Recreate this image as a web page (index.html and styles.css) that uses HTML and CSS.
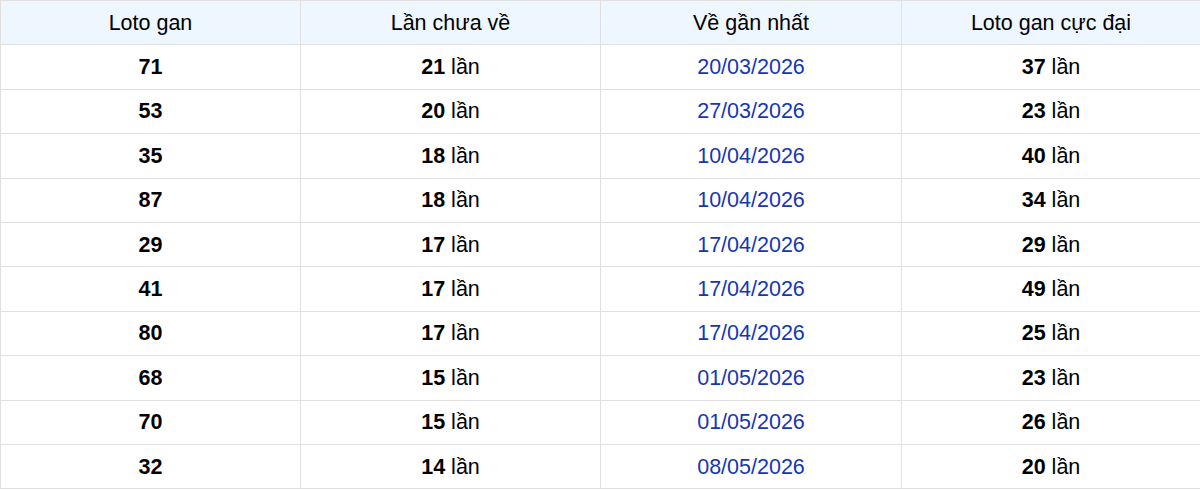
FILE: index.html
```html
<!DOCTYPE html>
<html lang="vi">
<head>
<meta charset="utf-8">
<link rel="stylesheet" href="styles.css">
</head>
<body>
<table class="gan">
  <colgroup>
    <col class="c1"><col class="c2"><col class="c3"><col class="c4">
  </colgroup>
  <thead>
    <tr><th>Loto gan</th><th>Lần chưa về</th><th>Về gần nhất</th><th>Loto gan cực đại</th></tr>
  </thead>
  <tbody>
    <tr><td><b>71</b></td><td><b>21</b> lần</td><td class="date">20/03/2026</td><td><b>37</b> lần</td></tr>
    <tr><td><b>53</b></td><td><b>20</b> lần</td><td class="date">27/03/2026</td><td><b>23</b> lần</td></tr>
    <tr><td><b>35</b></td><td><b>18</b> lần</td><td class="date">10/04/2026</td><td><b>40</b> lần</td></tr>
    <tr><td><b>87</b></td><td><b>18</b> lần</td><td class="date">10/04/2026</td><td><b>34</b> lần</td></tr>
    <tr><td><b>29</b></td><td><b>17</b> lần</td><td class="date">17/04/2026</td><td><b>29</b> lần</td></tr>
    <tr><td><b>41</b></td><td><b>17</b> lần</td><td class="date">17/04/2026</td><td><b>49</b> lần</td></tr>
    <tr><td><b>80</b></td><td><b>17</b> lần</td><td class="date">17/04/2026</td><td><b>25</b> lần</td></tr>
    <tr><td><b>68</b></td><td><b>15</b> lần</td><td class="date">01/05/2026</td><td><b>23</b> lần</td></tr>
    <tr><td><b>70</b></td><td><b>15</b> lần</td><td class="date">01/05/2026</td><td><b>26</b> lần</td></tr>
    <tr><td><b>32</b></td><td><b>14</b> lần</td><td class="date">08/05/2026</td><td><b>20</b> lần</td></tr>
  </tbody>
</table>
</body>
</html>
```
FILE: styles.css
```css
html, body {
  margin: 0;
  padding: 0;
  background: #ffffff;
}
body {
  font-family: "Liberation Sans", Arial, sans-serif;
  color: #000;
}
.gan {
  width: 1200px;
  border-collapse: collapse;
  table-layout: fixed;
}
.gan .c1 { width: 300px; }
.gan .c2 { width: 300px; }
.gan .c3 { width: 301px; }
.gan .c4 { width: 299px; }
.gan th, .gan td {
  border: 1px solid #e0e0e0;
  text-align: center;
  font-size: 21.5px;
  line-height: 24px;
  height: 44.4px;
  padding: 0 8px;
  box-sizing: border-box;
  font-weight: normal;
}
.gan th {
  background: #eef6ff;
}
.gan b {
  font-weight: bold;
}
.gan .date {
  color: #1636b2;
}
```
